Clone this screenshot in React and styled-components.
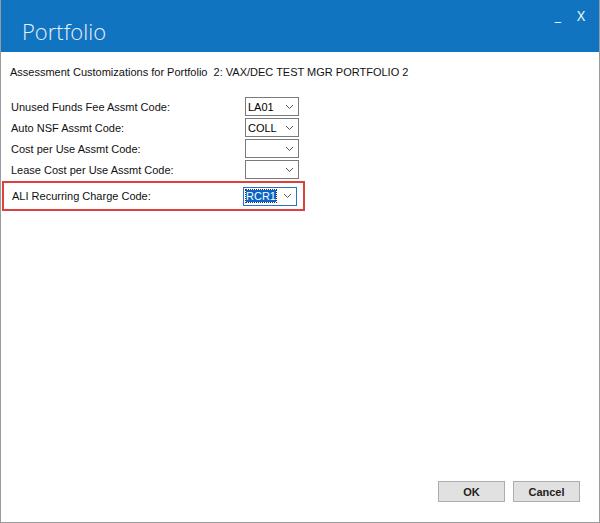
import React from "react";
import styled, { createGlobalStyle } from "styled-components";

const Global = createGlobalStyle`
  html, body { margin: 0; padding: 0; background: #fff; }
  body { font-family: "Liberation Sans", Arial, sans-serif; }
`;

const Window = styled.div`
  width: 600px; height: 523px; box-sizing: border-box;
  border: 1px solid #9a9a9a; border-top: none;
  display: flex; flex-direction: column; background: #fff;
`;
const Header = styled.div`
  height: 52px; background: #1174c0; display: flex; align-items: flex-start;
  justify-content: space-between; flex-shrink: 0;
`;
const Title = styled.div`
  color: #e8f0f8; font-family: "Open Sans", sans-serif; font-weight: 300;
  font-size: 22px; margin: 17px 0 0 21px; line-height: 28px;
`;
const Controls = styled.div`
  display: flex; gap: 16px; color: #fff; font-family: "Open Sans", sans-serif;
  font-size: 14px; margin: 6px 14px 0 0;
`;
const Sub = styled.div`
  font-size: 11px; color: #111; margin: 13px 0 0 9px; line-height: 14px;
`;
const Form = styled.div`
  display: flex; flex-direction: column; margin: 17px 0 0 0;
`;
const Row = styled.div`
  display: flex; align-items: center; justify-content: space-between;
  width: 288px; height: 21px; padding: 0 0 0 10px;
  ${p => p.$hl && `
    margin: 1px 0 0 1px; width: 285px; height: 26px; padding: 0 6px 0 8px;
    border: 2px solid #e0403a;
  `}
`;
const Label = styled.span`font-size: 11px; color: #111;`;
const Combo = styled.div`
  width: 54px; height: 19px; box-sizing: border-box; border: 1px solid #7a7a7a;
  display: flex; align-items: center; justify-content: space-between;
  font-size: 11px; padding: 0 4px 0 2px; background: #fff;
  ${p => p.$focus && `border-color: #2a6fc9;`}
`;
const Val = styled.span`
  ${p => p.$sel && `background: #0a64c8; color: #fff; outline: 1px dotted #333;`}
`;
const Footer = styled.div`
  margin-top: auto; display: flex; justify-content: flex-end; gap: 8px;
  padding: 0 19px 20px 0;
`;
const Btn = styled.button`
  width: 67px; height: 21px; background: #e1e1e1; border: 1px solid #adadad;
  font-family: "Liberation Sans", Arial, sans-serif; font-size: 11px; font-weight: bold;
  color: #222; padding: 0;
`;

const Chev = () => (
  <svg width="9" height="6" viewBox="0 0 9 6"><path d="M1 1l3.5 3.5L8 1" fill="none" stroke="#555" strokeWidth="1" /></svg>
);

const rows = [
  ["Unused Funds Fee Assmt Code:", "LA01"],
  ["Auto NSF Assmt Code:", "COLL"],
  ["Cost per Use Assmt Code:", ""],
  ["Lease Cost per Use Assmt Code:", ""],
];

export default function App() {
  return (
    <Window>
      <Global />
      <Header>
        <Title>Portfolio</Title>
        <Controls><span>_</span><span>X</span></Controls>
      </Header>
      <Sub>Assessment Customizations for Portfolio&nbsp; 2: VAX/DEC TEST MGR PORTFOLIO 2</Sub>
      <Form>
        {rows.map(([l, v]) => (
          <Row key={l}><Label>{l}</Label><Combo><Val>{v}</Val><Chev /></Combo></Row>
        ))}
        <Row $hl><Label>ALI Recurring Charge Code:</Label><Combo $focus><Val $sel>RCR1</Val><Chev /></Combo></Row>
      </Form>
      <Footer><Btn>OK</Btn><Btn>Cancel</Btn></Footer>
    </Window>
  );
}
